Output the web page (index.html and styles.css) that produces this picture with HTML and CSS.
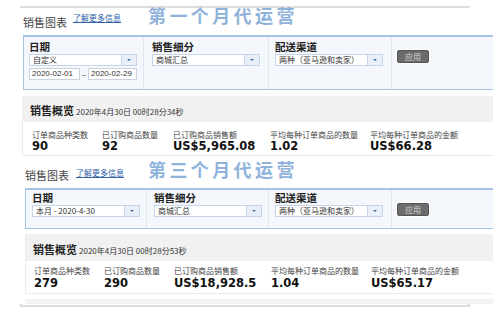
FILE: index.html
```html
<!DOCTYPE html>
<html lang="zh-CN">
<head>
	<meta charset="UTF-8">
	<title>销售图表</title>
	<link rel="stylesheet" href="styles.css">
</head>
<body>
	<div class="rule"></div>

	<section class="report">
		<div class="report-head">
			<h2 class="report-title">销售图表</h2>
			<a href="javascript:;" class="more">了解更多信息</a>
			<span class="stamp">第一个月代运营</span>
		</div>
		<div class="filters">
			<div class="col col-date">
				<label>日期</label>
				<div class="select"><span>自定义</span><i></i></div>
				<div class="range">
					<span class="field">2020-02-01</span>
					<span class="dash">–</span>
					<span class="field">2020-02-29</span>
				</div>
			</div>
			<div class="col col-type">
				<label>销售细分</label>
				<div class="select"><span>商城汇总</span><i></i></div>
			</div>
			<div class="col col-ship">
				<label>配送渠道</label>
				<div class="select"><span>两种（亚马逊和卖家）</span><i></i></div>
			</div>
			<div class="col col-apply">
				<a href="javascript:;" class="apply">应用</a>
			</div>
		</div>
		<div class="overview">
			<div class="overview-head">
				<h3>销售概览</h3>
				<span>2020年4月30日 00时28分34秒</span>
			</div>
			<div class="metrics">
				<div class="metric"><small>订单商品种类数</small><b>90</b></div>
				<div class="metric"><small>已订购商品数量</small><b>92</b></div>
				<div class="metric"><small>已订购商品销售额</small><b>US$5,965.08</b></div>
				<div class="metric"><small>平均每种订单商品的数量</small><b>1.02</b></div>
				<div class="metric"><small>平均每种订单商品的金额</small><b>US$66.28</b></div>
			</div>
		</div>
	</section>

	<section class="report report-b">
		<div class="report-head">
			<h2 class="report-title">销售图表</h2>
			<a href="javascript:;" class="more">了解更多信息</a>
			<span class="stamp">第三个月代运营</span>
		</div>
		<div class="filters">
			<div class="col col-date">
				<label>日期</label>
				<div class="select"><span>本月 - 2020-4-30</span><i></i></div>
			</div>
			<div class="col col-type">
				<label>销售细分</label>
				<div class="select"><span>商城汇总</span><i></i></div>
			</div>
			<div class="col col-ship">
				<label>配送渠道</label>
				<div class="select"><span>两种（亚马逊和卖家）</span><i></i></div>
			</div>
			<div class="col col-apply">
				<a href="javascript:;" class="apply">应用</a>
			</div>
		</div>
		<div class="overview">
			<div class="overview-head">
				<h3>销售概览</h3>
				<span>2020年4月30日 00时28分53秒</span>
			</div>
			<div class="metrics">
				<div class="metric"><small>订单商品种类数</small><b>279</b></div>
				<div class="metric"><small>已订购商品数量</small><b>290</b></div>
				<div class="metric"><small>已订购商品销售额</small><b>US$18,928.5</b></div>
				<div class="metric"><small>平均每种订单商品的数量</small><b>1.04</b></div>
				<div class="metric"><small>平均每种订单商品的金额</small><b>US$65.17</b></div>
			</div>
		</div>
		<div class="strip"></div>
	</section>

	<div class="rule rule-end"></div>
</body>
</html>
```

FILE: styles.css
```css
* {
	box-sizing: border-box;
	margin: 0;
	padding: 0;
}
body {
	width: 493px;
	height: 327px;
	overflow: hidden;
	background: #fff;
	color: #333;
	font-family: "Noto Sans CJK SC", "DejaVu Sans", sans-serif;
}
.rule {
	width: 450px;
	height: 2px;
	margin: 6px 0 0 20px;
	background: #dcdcdc;
}
.rule-end {
	height: 3px;
	margin-top: 0;
	background: none;
	border: 2px solid #dcdcdc;
	border-top: 0;
}

/* header line */
.report-head {
	display: flex;
	align-items: flex-start;
	height: 27px;
}
.report-title {
	margin: 9px 0 0 23px;
	font-size: 11px;
	line-height: 11px;
	font-weight: normal;
	color: #444;
}
.more {
	margin: 5px 0 0 6px;
	font-size: 8px;
	line-height: 9px;
	color: #2f62a8;
	text-decoration: underline;
}
.stamp {
	margin: -2px 0 0 27px;
	font-size: 18px;
	line-height: 18px;
	letter-spacing: 3.4px;
	font-weight: bold;
	color: #8fb3db;
	white-space: nowrap;
}

/* filter panel */
.filters {
	display: flex;
	height: 55px;
	margin: 0 -20px 0 23px;
	background: #f4f7fb;
	border: 1px solid #a7c3e3;
	border-top-width: 2px;
}
.col {
	border-right: 1px solid #e1e6ee;
	padding: 5px 6px 0 5px;
}
.col label {
	display: block;
	font-size: 10.5px;
	line-height: 10px;
	font-weight: bold;
	color: #222;
}
.col-date {
	width: 120px;
}
.col-type {
	width: 125px;
	padding-left: 8px;
}
.col-ship {
	width: 123px;
	padding-left: 6px;
}
.col-apply {
	flex: 1;
	border-right: 0;
	padding: 13px 0 0 5px;
}
.select {
	display: flex;
	width: 108px;
	height: 12px;
	margin-top: 2px;
	background: #fff;
	border: 1px solid #c6d6e8;
}
.select span {
	flex: 1;
	padding-left: 3px;
	font-size: 8px;
	line-height: 10px;
	color: #333;
	white-space: nowrap;
	overflow: hidden;
}
.select i {
	display: flex;
	align-items: center;
	justify-content: center;
	width: 15px;
	background: #e8eff8;
	border-left: 1px solid #c6d6e8;
}
.select i::after {
	content: "";
	border-left: 2px solid transparent;
	border-right: 2px solid transparent;
	border-top: 2px solid #3f6fa6;
}
.range {
	display: flex;
	align-items: center;
	width: 108px;
	margin-top: 2px;
}
.field {
	width: 51px;
	height: 12px;
	padding-left: 2px;
	background: #fff;
	border: 1px solid #c8d3e0;
	font-family: "Liberation Sans", sans-serif;
	font-size: 8px;
	line-height: 10px;
	color: #333;
}
.range .field:last-child {
	width: 49px;
}
.dash {
	flex: 1;
	text-align: center;
	font-size: 8px;
	color: #333;
}
.apply {
	display: block;
	width: 32px;
	height: 13px;
	background: #6c6c6c;
	border: 1px solid #555;
	border-radius: 2px;
	box-shadow: 0 0 0 1px #fff;
	color: #d2d2d2;
	font-size: 8px;
	line-height: 11px;
	text-align: center;
	text-decoration: none;
}

/* overview */
.overview {
	margin: 6px -20px 0 22px;
	border: 1px solid #ececec;
	border-top: 0;
}
.overview-head {
	display: flex;
	align-items: baseline;
	height: 26px;
	padding: 9px 0 0 7px;
	background: #f1f1f1;
}
.overview-head h3 {
	font-size: 11px;
	line-height: 11px;
	font-weight: bold;
	color: #222;
}
.overview-head span {
	margin-left: 2px;
	font-size: 8px;
	color: #333;
}
.metrics {
	display: grid;
	grid-template-columns: 70px 71px 97px 100px 1fr;
	height: 33px;
	padding: 8px 0 0 9px;
	background: #fff;
}
.metric small {
	display: block;
	font-size: 8px;
	line-height: 9px;
	color: #444;
	white-space: nowrap;
}
.metric b {
	display: block;
	margin-top: 1px;
	font-family: "DejaVu Sans", sans-serif;
	font-size: 11.5px;
	line-height: 12px;
	color: #111;
	white-space: nowrap;
	overflow: hidden;
}

/* second capture */
.report-b {
	margin-top: 6px;
}
.report-b .report-head {
	height: 26px;
}
.report-b .report-title {
	margin: 8px 0 0 25px;
}
.report-b .more {
	margin: 6px 0 0 7px;
}
.report-b .stamp {
	margin-left: 24px;
}
.report-b .filters {
	height: 41px;
	margin-left: 25px;
}
.report-b .col {
	padding-top: 3px;
}
.report-b .col-date {
	width: 121px;
	padding-left: 6px;
}
.report-b .col-type {
	width: 122px;
	padding-left: 7px;
}
.report-b .col-apply {
	padding-top: 13px;
}
.report-b .overview {
	margin: 5px -20px 0 25px;
}
.report-b .overview-head {
	height: 27px;
	padding-top: 10px;
}
.report-b .metrics {
	grid-template-columns: 70px 70px 97px 100px 1fr;
	height: 32px;
	padding: 5px 0 0 8px;
}
.report-b .metric b {
	margin-top: 2px;
}
.strip {
	height: 5px;
	margin: 5px -20px 0 25px;
	background: #f3f3f3;
}
```
